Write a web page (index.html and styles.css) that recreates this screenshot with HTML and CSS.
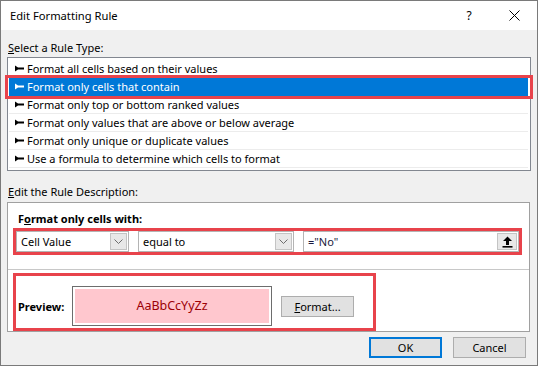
FILE: index.html
```html
<!DOCTYPE html>
<html lang="en">
<head>
    <meta charset="UTF-8">
    <title>Edit Formatting Rule</title>
    <link rel="stylesheet" href="styles.css">
</head>
<body>
    <div class="window">
        <div class="titlebar">
            <span class="title">Edit Formatting Rule</span>
            <span class="tb-help">?</span>
            <span class="tb-close">
                <svg width="11" height="11" viewBox="0 0 11 11"><path d="M0.5 0.5 L10.5 10.5 M10.5 0.5 L0.5 10.5" stroke="#000" stroke-width="1"/></svg>
            </span>
        </div>
        <div class="body">
            <div class="label label-type"><u>S</u>elect a Rule Type:</div>
            <div class="rule-list">
                <div class="rule-row"><svg class="arrow" width="9" height="7" viewBox="0 0 9 7"><path d="M0 0.5 L3 2.5 L9 2.5 L9 4.5 L3 4.5 L0 6.5 Z"/></svg>Format all cells based on their values</div>
                <div class="rule-row selected"><svg class="arrow" width="9" height="7" viewBox="0 0 9 7"><path d="M0 0.5 L3 2.5 L9 2.5 L9 4.5 L3 4.5 L0 6.5 Z"/></svg>Format only cells that contain</div>
                <div class="rule-row"><svg class="arrow" width="9" height="7" viewBox="0 0 9 7"><path d="M0 0.5 L3 2.5 L9 2.5 L9 4.5 L3 4.5 L0 6.5 Z"/></svg>Format only top or bottom ranked values</div>
                <div class="rule-row"><svg class="arrow" width="9" height="7" viewBox="0 0 9 7"><path d="M0 0.5 L3 2.5 L9 2.5 L9 4.5 L3 4.5 L0 6.5 Z"/></svg>Format only values that are above or below average</div>
                <div class="rule-row"><svg class="arrow" width="9" height="7" viewBox="0 0 9 7"><path d="M0 0.5 L3 2.5 L9 2.5 L9 4.5 L3 4.5 L0 6.5 Z"/></svg>Format only unique or duplicate values</div>
                <div class="rule-row"><svg class="arrow" width="9" height="7" viewBox="0 0 9 7"><path d="M0 0.5 L3 2.5 L9 2.5 L9 4.5 L3 4.5 L0 6.5 Z"/></svg>Use a formula to determine which cells to format</div>
                <div class="select-mark"></div>
            </div>

            <div class="label label-desc"><u>E</u>dit the Rule Description:</div>
            <div class="desc">
                <div class="desc-head">F<u>o</u>rmat only cells with:</div>
                <div class="mark criteria">
                    <div class="combo combo-field">
                        <span class="combo-text">Cell Value</span>
                        <span class="combo-btn"><svg width="9" height="5" viewBox="0 0 9 5"><path d="M0.5 0.5 L4.5 4.5 L8.5 0.5" fill="none" stroke="#6d6d6d"/></svg></span>
                    </div>
                    <div class="combo combo-op">
                        <span class="combo-text">equal to</span>
                        <span class="combo-btn"><svg width="9" height="5" viewBox="0 0 9 5"><path d="M0.5 0.5 L4.5 4.5 L8.5 0.5" fill="none" stroke="#6d6d6d"/></svg></span>
                    </div>
                    <div class="combo ref-field">
                        <span class="combo-text ref-text">="No"</span>
                        <span class="ref-btn"><svg width="11" height="12" viewBox="0 0 11 12"><path d="M5.5 0.5 L10 5 L7 5 L7 9 L4 9 L4 5 L1 5 Z"/><rect x="0.5" y="10" width="10" height="1.6"/></svg></span>
                    </div>
                </div>
                <div class="desc-sep"></div>
                <div class="mark preview-row">
                    <span class="preview-label">Preview:</span>
                    <div class="swatch"><div class="swatch-fill">AaBbCcYyZz</div></div>
                    <button class="btn btn-format"><u>F</u>ormat...</button>
                </div>
            </div>

            <div class="actions">
                <button class="btn btn-ok">OK</button>
                <button class="btn">Cancel</button>
            </div>
        </div>
    </div>
</body>
</html>
```

FILE: styles.css
```css
body {
    margin: 0;
    font-family: "Noto Sans", sans-serif;
    font-size: 11px;
    color: #000;
}
.window {
    width: 538px;
    height: 366px;
    box-sizing: border-box;
    border: 1px solid #7a7a7a;
    background: #f0f0f0;
    display: flex;
    flex-direction: column;
}
.titlebar {
    height: 29px;
    background: #fff;
    display: flex;
    align-items: center;
    padding-left: 9px;
    flex-shrink: 0;
}
.title {
    font-size: 11.2px;
    flex: 1;
}
.tb-help {
    font-size: 12px;
    width: 46px;
    text-align: center;
    margin-right: -1px;
}
.tb-close {
    width: 46px;
    display: flex;
    justify-content: center;
    margin-right: 0;
}
.body {
    padding: 0 6px;
    display: flex;
    flex-direction: column;
}
.label {
    height: 15px;
    line-height: 15px;
    padding-left: 1px;
}
.label-type {
    margin-top: 10px;
}
.rule-list {
    position: relative;
    margin-top: 2px;
    background: #fff;
    border: 1px solid #828790;
    padding: 2px 2px 2px 1px;
}
.rule-row {
    height: 17px;
    line-height: 17px;
    border-bottom: 1px solid #ececec;
    padding-left: 6px;
    display: flex;
    align-items: center;
    white-space: nowrap;
}
.rule-row .arrow {
    fill: #000;
    margin-right: 3px;
}
.rule-row.selected {
    background: #0078d7;
    color: #fff;
    border-bottom-color: #0078d7;
}
.rule-row.selected .arrow {
    fill: #fff;
}
.select-mark {
    position: absolute;
    left: -3px;
    top: 17px;
    width: 528px;
    height: 24px;
    box-sizing: border-box;
    border: 3px solid #e8434b;
}
.label-desc {
    margin-top: 13px;
}
.desc {
    margin-top: 3px;
    margin-right: 1px;
    background: #fff;
    border: 1px solid #a0a0a0;
    padding: 8px 7px 0 5px;
}
.desc-head {
    font-weight: bold;
    height: 15px;
    line-height: 15px;
    padding-left: 5px;
}
.mark {
    border: 3px solid #e8434b;
}
.criteria {
    margin-top: 2px;
    display: flex;
    gap: 9px;
    width: 503px;
}
.combo {
    height: 21px;
    box-sizing: border-box;
    border: 1px solid #b4b4b4;
    background: #fff;
    display: flex;
    align-items: stretch;
}
.combo-text {
    flex: 1;
    line-height: 19px;
    padding-left: 4px;
    white-space: nowrap;
}
.combo-field {
    width: 113px;
}
.combo-op {
    width: 156px;
}
.ref-field {
    width: 216px;
}
.combo-btn {
    width: 17px;
    margin: 1px;
    box-sizing: border-box;
    border: 1px solid #c4c4c4;
    background: #e8e8e8;
    display: flex;
    align-items: center;
    justify-content: center;
}
.ref-text {
    color: #1a1a40;
}
.ref-btn {
    width: 20px;
    margin: 1px;
    box-sizing: border-box;
    border: 1px solid #c4c4c4;
    background: #e8e8e8;
    display: flex;
    align-items: center;
    justify-content: center;
}
.desc-sep {
    margin: 14px -7px 0 -5px;
    border-top: 1px solid #c8c8c8;
}
.preview-row {
    margin-top: 3px;
    width: 355px;
    display: flex;
    align-items: center;
    padding: 10px 0 2px 2px;
}
.preview-label {
    font-weight: bold;
    width: 54px;
}
.swatch {
    border: 1px solid #6d6d6d;
    padding: 2px;
    background: #fff;
}
.swatch-fill {
    width: 194px;
    height: 34px;
    line-height: 34px;
    background: #ffc7ce;
    color: #9c0006;
    text-align: center;
    font-size: 12.5px;
}
.btn {
    font-family: "Noto Sans", sans-serif;
    font-size: 11px;
    color: #000;
    height: 21px;
    width: 73px;
    padding: 0;
    background: #e1e1e1;
    border: 1px solid #adadad;
}
.btn-format {
    margin-left: 9px;
}
.actions {
    display: flex;
    justify-content: flex-end;
    gap: 11px;
    margin-top: 5px;
    padding-right: 5px;
}
.btn-ok {
    border: 2px solid #0078d7;
}
```
